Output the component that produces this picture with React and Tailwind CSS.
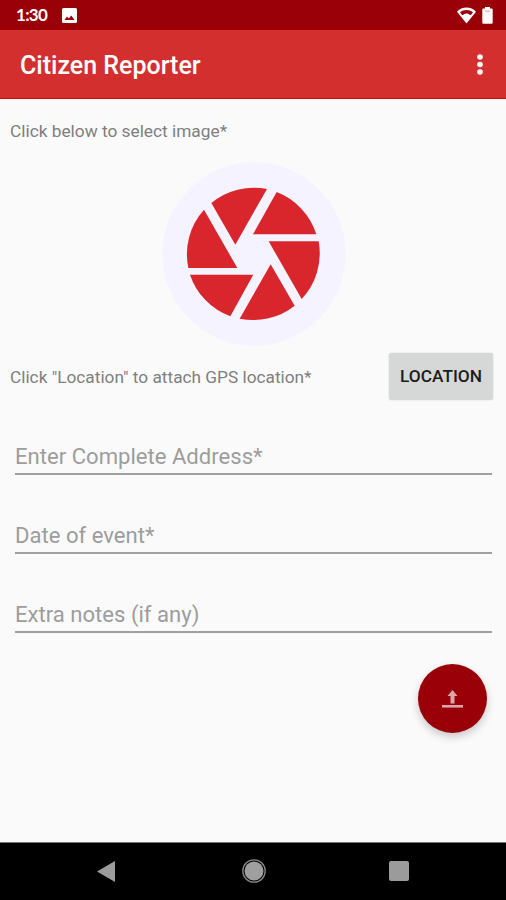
import React from "react";

const fields = [
  { name: "address", label: "Enter Complete Address*" },
  { name: "date", label: "Date of event*" },
  { name: "notes", label: "Extra notes (if any)" },
];

const StatusBar = () => (
  <div className="h-[30px] shrink-0 bg-[#990007] flex items-center justify-between pl-4 pr-[13px] text-white">
    <div className="flex items-center">
      <span className="w-[46px] shrink-0 font-[Lato,sans-serif] text-[17px] leading-[30px] font-bold tracking-[-0.7px]">
        1:30
      </span>
      <svg width="15" height="15" viewBox="0 0 15 15">
        <rect width="15" height="15" rx="1.6" fill="#fff" />
        <path d="M2.4 12 L5 8.6 L6.8 10.6 L9.2 7.6 L12.6 12 Z" fill="#990007" />
      </svg>
    </div>
    <div className="flex items-center gap-[6px]">
      <svg width="19" height="17" viewBox="0 0 19 17">
        <path d="M0 4.8 C5 -0.8 14 -0.8 19 4.8 L9.5 16.5 Z" fill="#fff" />
        <path d="M3 5.4 C7 2.2 12 2.2 16 5.4 L13.6 8.2 C12 7.4 11.5 6.4 9.5 6.4 C7.5 6.4 7 7.4 5.4 8.2 Z" fill="#990007" />
      </svg>
      <svg width="11" height="17" viewBox="0 0 11 17">
        <path d="M3 0 h5 v1.4 h1.5 a1.2 1.2 0 0 1 1.2 1.2 v13 a1.2 1.2 0 0 1 -1.2 1.2 h-8 a1.2 1.2 0 0 1 -1.2 -1.2 v-13 a1.2 1.2 0 0 1 1.2 -1.2 h1.5 Z" fill="#fff" />
        <rect x="3" y="3.4" width="5" height="1.6" fill="#ddc4c4" />
      </svg>
    </div>
  </div>
);

const AppBar = () => (
  <div className="h-[69px] shrink-0 bg-[#d32f2f] border-b border-[#c20f10] flex items-center justify-between pl-5 pr-[23px] text-white">
    <h1 className="text-[25px] font-medium leading-none pt-[2px]">Citizen Reporter</h1>
    <button aria-label="More options">
      <svg width="6" height="22" viewBox="0 0 6 22" fill="#fff">
        <circle cx="3" cy="4" r="2.8" />
        <circle cx="3" cy="11.5" r="2.8" />
        <circle cx="3" cy="19" r="2.8" />
      </svg>
    </button>
  </div>
);

const Aperture = () => (
  <svg width="184" height="184" viewBox="27 20 552 552">
    <circle cx="303" cy="296" r="275" fill="#f5f3ff" />
    <g fill="#d9262c">
      <path d="M175 143 L247 268 L342 101 A200 200 0 0 0 175 143 Z" />
      <path d="M371 110 L300 237 L490 237 A200 200 0 0 0 371 110 Z" />
      <path d="M347 258 L497 258 A200 200 0 0 1 446 431 Z" />
      <path d="M353 327 L425 451 A200 200 0 0 1 260 490 Z" />
      <path d="M301 358 L232 483 A200 200 0 0 1 111 358 Z" />
      <path d="M253 338 L106 338 A200 200 0 0 1 153 163 Z" />
    </g>
  </svg>
);

const NavBar = () => (
  <div className="h-[58px] shrink-0 bg-black border-t border-[#777] flex items-center pb-px pl-[97px]">
    <svg width="18" height="21" viewBox="0 0 18 21">
      <path d="M0 10.5 L18 0 V21 Z" fill="#9b9b9b" />
    </svg>
    <svg className="ml-[127px]" width="24" height="24" viewBox="0 0 24 24">
      <circle cx="12" cy="12" r="11.2" fill="none" stroke="#8a8a8a" strokeWidth="1.3" />
      <circle cx="12" cy="12" r="9.5" fill="#9f9f9f" />
    </svg>
    <div className="ml-[123px] w-5 h-5 rounded-[2px] bg-[#9b9b9b]" />
  </div>
);

const App = () => {
  return (
    <div className="w-full h-screen flex flex-col overflow-hidden bg-[#fafafa] font-[Roboto,sans-serif]">
      <StatusBar />
      <AppBar />

      <main className="flex-1 min-h-0 flex flex-col">
        <p className="pt-[22px] pl-[10px] text-[17.3px] leading-5 text-[#7f7f7f]">
          Click below to select image*
        </p>

        <button className="mt-[21px] ml-[2px] self-center" aria-label="Select image">
          <Aperture />
        </button>

        <div className="mt-[6px] h-[48px] flex items-center justify-between pl-[10px] pr-[13px]">
          <p className="pt-px text-[17.25px] leading-5 text-[#7f7f7f]">
            Click "Location" to attach GPS location*
          </p>
          <button className="w-[104px] h-[47px] pt-[2px] rounded-[2px] bg-[#d6d8d7] text-[17.3px] font-medium text-[#1c1c1c] shadow-[0_0_2px_rgba(0,0,0,0.15)]">
            LOCATION
          </button>
        </div>

        <form className="pt-[28px] pl-[15px] pr-[14px]">
          {fields.map((field) => (
            <label
              key={field.name}
              className="mb-[32px] h-[47px] flex items-end pb-[3px] border-b-2 border-[#a0a0a0] text-[22.1px] leading-7 text-[#9d9d9d]"
            >
              {field.label}
            </label>
          ))}
        </form>

        <button
          aria-label="Upload report"
          className="-mt-px self-end mr-[19px] w-[69px] h-[69px] shrink-0 rounded-full bg-[#990007] flex items-center justify-center shadow-[0_4px_8px_rgba(0,0,0,0.2)]"
        >
          <svg width="21" height="18" viewBox="0 0 21 18" fill="#dba5a9">
            <path d="M10.5 0 L15.5 6 H12.5 V13.5 H8.5 V6 H5.5 Z" />
            <rect x="0" y="15" width="21" height="2.6" />
          </svg>
        </button>
      </main>

      <NavBar />
    </div>
  );
};

export default App;
